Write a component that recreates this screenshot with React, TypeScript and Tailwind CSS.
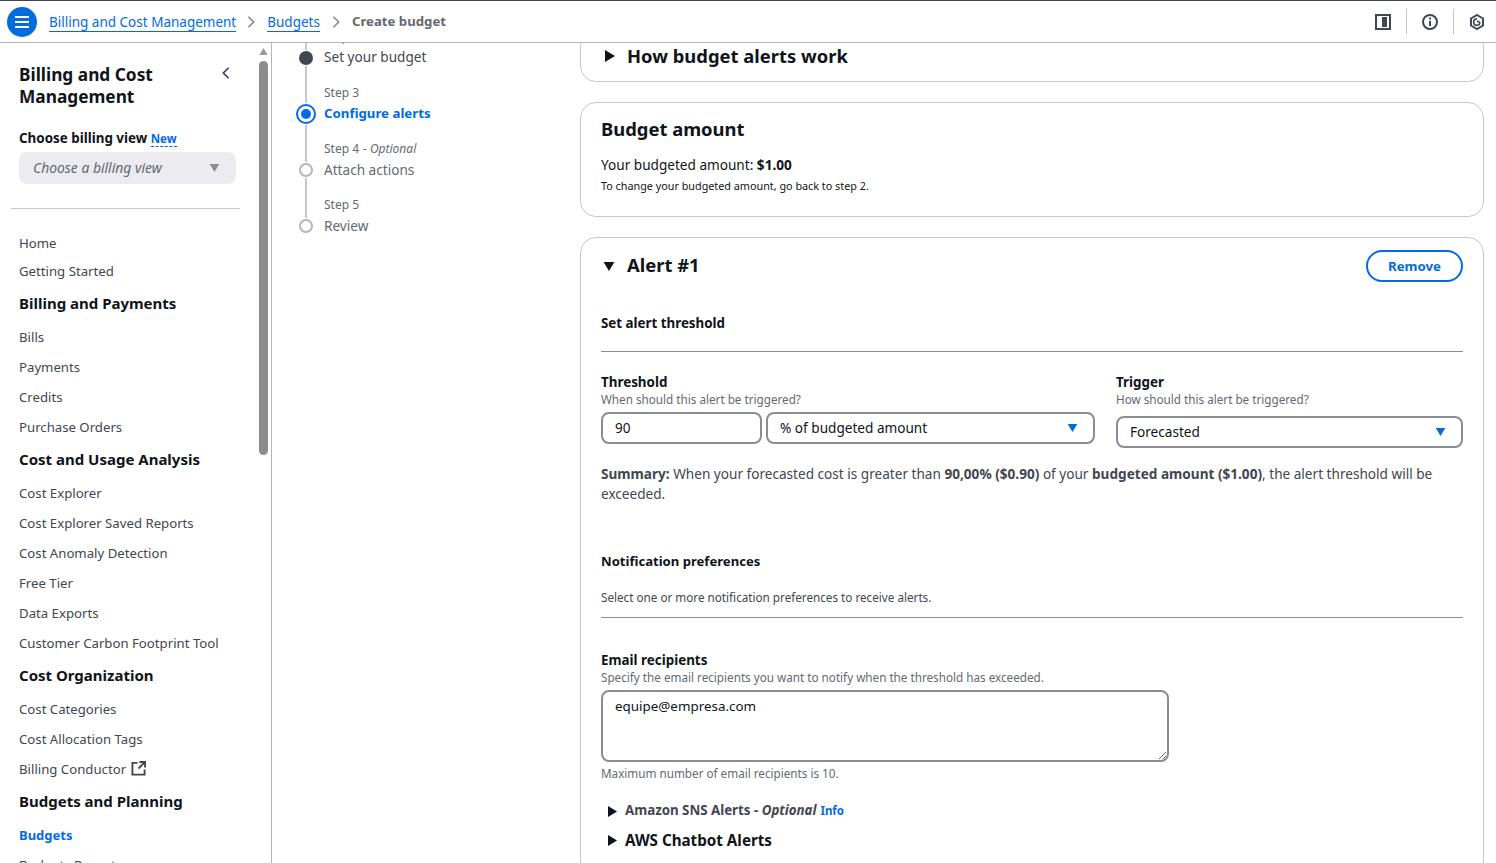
import React from 'react';

const BLUE = 'text-[#006ce0]';

type NavRow = { label: string; kind: 'item' | 'head' | 'active' | 'ext'; first?: boolean; tail?: boolean };

const NAV: NavRow[] = [
  { label: 'Home', kind: 'item', first: true },
  { label: 'Getting Started', kind: 'item', first: true, tail: true },
  { label: 'Billing and Payments', kind: 'head' },
  { label: 'Bills', kind: 'item' },
  { label: 'Payments', kind: 'item' },
  { label: 'Credits', kind: 'item' },
  { label: 'Purchase Orders', kind: 'item' },
  { label: 'Cost and Usage Analysis', kind: 'head' },
  { label: 'Cost Explorer', kind: 'item' },
  { label: 'Cost Explorer Saved Reports', kind: 'item' },
  { label: 'Cost Anomaly Detection', kind: 'item' },
  { label: 'Free Tier', kind: 'item' },
  { label: 'Data Exports', kind: 'item' },
  { label: 'Customer Carbon Footprint Tool', kind: 'item' },
  { label: 'Cost Organization', kind: 'head' },
  { label: 'Cost Categories', kind: 'item' },
  { label: 'Cost Allocation Tags', kind: 'item' },
  { label: 'Billing Conductor', kind: 'ext' },
  { label: 'Budgets and Planning', kind: 'head' },
  { label: 'Budgets', kind: 'active' },
  { label: 'Budgets Reports', kind: 'item' },
];

const STEPS = [
  { label: 'Step 2', title: 'Set your budget', state: 'done' },
  { label: 'Step 3', title: 'Configure alerts', state: 'current' },
  { label: 'Step 4', optional: true, title: 'Attach actions', state: 'todo' },
  { label: 'Step 5', title: 'Review', state: 'todo' },
];

const Chevron: React.FC<{ className?: string }> = ({ className }) => (
  <svg viewBox="0 0 10 16" className={className} fill="none" stroke="currentColor" strokeWidth="2">
    <path d="M2 2l6 6-6 6" />
  </svg>
);

const CaretRight: React.FC<{ className?: string }> = ({ className }) => (
  <svg viewBox="0 0 10 12" className={className} fill="currentColor">
    <path d="M0 0l10 6-10 6z" />
  </svg>
);

const CaretDown: React.FC<{ className?: string }> = ({ className }) => (
  <svg viewBox="0 0 12 10" className={className} fill="currentColor">
    <path d="M0 0h12L6 10z" />
  </svg>
);

const TopBar = () => (
  <header className="flex h-[43px] shrink-0 items-center border-t border-b border-t-[#424650] border-b-[#b4b4bb] bg-white">
    <div className="ml-[7px] flex h-[30px] w-[30px] items-center justify-center rounded-full bg-[#006ce0]">
      <svg viewBox="0 0 16 14" className="h-[14px] w-[16px]" stroke="white" strokeWidth="2">
        <path d="M1 2h14M1 7h14M1 12h14" />
      </svg>
    </div>
    <a className={`ml-3 mt-[1px] border-b border-[#006ce0] text-[13.5px] leading-[18px] ${BLUE}`}>Billing and Cost Management</a>
    <Chevron className="ml-[10px] h-[14px] w-[10px] text-[#8c8c94]" />
    <a className={`ml-[11px] mt-[1px] border-b border-[#006ce0] text-[13.5px] leading-[18px] ${BLUE}`}>Budgets</a>
    <Chevron className="ml-[11px] h-[14px] w-[10px] text-[#8c8c94]" />
    <span className="ml-[11px] mt-[1px] text-[13.2px] font-bold text-[#656871]">Create budget</span>
    <div className="ml-auto flex items-center text-[#424650]">
      <svg viewBox="0 0 16 16" className="h-4 w-4" fill="none">
        <rect x="1" y="1" width="14" height="14" stroke="currentColor" strokeWidth="2" />
        <rect x="7" y="3" width="5" height="10" fill="currentColor" />
      </svg>
      <div className="ml-[15px] h-[25px] w-px bg-[#c6c6cd]" />
      <svg viewBox="0 0 16 16" className="ml-[15px] h-4 w-4" fill="none" stroke="currentColor" strokeWidth="2">
        <circle cx="8" cy="8" r="7" />
        <path d="M8 7v5" />
        <path d="M8 3.4v2" />
      </svg>
      <div className="ml-[15px] h-[25px] w-px bg-[#c6c6cd]" />
      <svg viewBox="0 0 16 16" className="ml-[15px] mr-[11px] h-4 w-4" fill="none" stroke="currentColor" strokeWidth="2">
        <path d="M8 1l6 3.5v7L8 15l-6-3.5v-7z" />
        <path d="M11 8.5a3.2 3.2 0 1 1-3-3.6" strokeWidth="1.6" />
        <path d="M8 7l3 1.5" strokeWidth="1.6" />
      </svg>
    </div>
  </header>
);

const NavItem: React.FC<{ row: NavRow }> = ({ row }) => {
  if (row.kind === 'head') {
    return <div className="mb-1 flex h-8 items-center text-[15px] font-bold text-[#0f141a]">{row.label}</div>;
  }
  if (row.kind === 'active') {
    return <div className={`flex h-[30px] items-center text-[13px] font-bold ${BLUE}`}>{row.label}</div>;
  }
  return (
    <div className={`flex items-center text-[13.2px] text-[#424650] ${row.first ? 'h-[28px]' : 'h-[30px]'} ${row.tail ? 'mb-[1px]' : ''}`}>
      {row.label}
      {row.kind === 'ext' && (
        <svg viewBox="0 0 16 16" className="mb-[3px] ml-[5px] h-[15px] w-[15px]" fill="none" stroke="#424650" strokeWidth="2">
          <path d="M7 2H1.5v12.5h13V9" />
          <path d="M9 1h6v6M15 1L8 8" />
        </svg>
      )}
    </div>
  );
};

const Sidebar = () => (
  <aside className="flex w-[272px] shrink-0 border-r border-[#b4b4bb] bg-white">
    <div className="w-[258px] shrink-0 overflow-hidden pt-[21px]">
      <div className="flex items-start justify-between pl-[19px] pr-[27px]">
        <h2 className="text-[17.3px] font-bold leading-[22px] text-[#0f141a]">
          Billing and Cost
          <br />
          Management
        </h2>
        <svg viewBox="0 0 10 16" className="mt-[2px] h-[14px] w-[10px] text-[#424650]" fill="none" stroke="currentColor" strokeWidth="2">
          <path d="M8 2L2 8l6 6" />
        </svg>
      </div>
      <div className="mt-5 pl-[19px] text-[13.4px] font-bold leading-[20px] text-[#0f141a]">
        Choose billing view{' '}
        <span className={`border-b border-dashed border-[#006ce0] text-[11.5px] ${BLUE}`}>New</span>
      </div>
      <div className="ml-[19px] mr-[22px] mt-[3px] flex h-8 items-center justify-between rounded-lg bg-[#ebebf0] pl-[14px] pr-[16px] text-[13.9px] italic text-[#656871]">
        Choose a billing view
        <CaretDown className="h-[8px] w-[11px] text-[#8c8c94]" />
      </div>
      <div className="ml-[11px] mr-[18px] mt-6 h-px bg-[#c6c6cd]" />
      <nav className="mt-[21px] pl-[19px]">
        {NAV.map(row => (
          <NavItem key={row.label} row={row} />
        ))}
      </nav>
    </div>
    <div className="flex w-[13px] shrink-0 flex-col items-center pt-[5px]">
      <CaretDown className="ml-[-2px] h-[7px] w-[9px] rotate-180 text-[#9a9a9a]" />
      <div className="ml-[-2px] mt-[6px] h-[394px] w-[9px] rounded-full bg-[#8c8c8c]" />
    </div>
  </aside>
);

const StepCircle: React.FC<{ state: string }> = ({ state }) => {
  if (state === 'done') return <div className="h-[14px] w-[14px] rounded-full bg-[#424650]" />;
  if (state === 'current') {
    return (
      <div className="flex h-5 w-5 items-center justify-center rounded-full border-2 border-[#006ce0] bg-white">
        <div className="h-[10px] w-[10px] rounded-full bg-[#006ce0]" />
      </div>
    );
  }
  return <div className="h-[14px] w-[14px] rounded-full border-2 border-[#b4b4bb] bg-white" />;
};

const Steps = () => (
  <div className="ml-6 mt-[-13px] w-[284px] shrink-0">
    {STEPS.map((s, i) => (
      <div key={s.label} className="flex h-14">
        <div className="flex w-5 flex-col items-center">
          <div className="w-[2px] flex-1 bg-[#c6c6cd]" />
          <div className="py-[1px]">
            <StepCircle state={s.state} />
          </div>
          <div className={`w-[2px] flex-1 ${i === STEPS.length - 1 ? 'bg-transparent' : 'bg-[#c6c6cd]'}`} />
        </div>
        <div className="ml-2">
          <div className="flex h-[14px] items-center text-xs text-[#656871]">
            {s.label}
            {s.optional && <span className="ml-1 italic">- Optional</span>}
          </div>
          <div
            className={`flex items-center ${
              s.state === 'current'
                ? `h-[27px] text-[13.25px] font-bold ${BLUE}`
                : s.state === 'done'
                  ? 'h-[27px] text-[13.6px] text-[#424650]'
                  : 'h-7 text-[13.6px] text-[#656871]'
            }`}
          >
            {s.title}
          </div>
        </div>
      </div>
    ))}
  </div>
);

const Card: React.FC<{ className?: string; children: React.ReactNode }> = ({ className, children }) => (
  <section className={`rounded-2xl border border-[#c6c6cd] bg-white ${className ?? ''}`}>{children}</section>
);

const FieldHead: React.FC<{ title: string; hint: string }> = ({ title, hint }) => (
  <>
    <div className="text-[13.4px] font-bold leading-[17px] text-[#0f141a]">{title}</div>
    <div className="text-[11.7px] leading-[17px] text-[#656871]">{hint}</div>
  </>
);

const SelectBox: React.FC<{ value: string; className?: string }> = ({ value, className }) => (
  <div className={`flex h-8 items-center justify-between rounded-lg border-2 border-[#8c8c94] pl-3 pr-[15px] text-[13.6px] text-[#0f141a] ${className ?? ''}`}>
    {value}
    <CaretDown className={`h-[8px] w-[11px] ${BLUE}`} />
  </div>
);

const AlertCard = () => (
  <Card className="mt-5 px-5 pb-10 pt-3">
    <div className="flex h-8 items-center justify-between">
      <div className="flex items-center">
        <CaretDown className="ml-[2px] mt-[1px] h-[9px] w-[12px] text-[#0f141a]" />
        <h2 className="mb-[2px] ml-3 text-[18.4px] font-bold text-[#0f141a]">Alert #1</h2>
      </div>
      <button className={`h-8 w-[97px] rounded-full border-2 border-[#006ce0] pt-[1px] text-[13.25px] font-bold ${BLUE}`}>Remove</button>
    </div>
    <h3 className="mt-[31px] text-[13.35px] font-bold leading-[20px] text-[#0f141a]">Set alert threshold</h3>
    <div className="mt-[18px] h-px bg-[#8c8c94]" />
    <div className="mt-[22px] flex">
      <div className="w-[494px] shrink-0">
        <FieldHead title="Threshold" hint="When should this alert be triggered?" />
        <div className="mt-[4px] flex gap-1">
          <div className="flex h-8 w-[161px] items-center rounded-lg border-2 border-[#8c8c94] pl-3 text-[13.6px] text-[#0f141a]">90</div>
          <SelectBox value="% of budgeted amount" className="w-[329px]" />
        </div>
      </div>
      <div className="ml-[21px] flex-1">
        <FieldHead title="Trigger" hint="How should this alert be triggered?" />
        <SelectBox value="Forecasted" className="mt-2" />
      </div>
    </div>
    <p className="mt-4 text-[13.6px] leading-[20px] text-[#424650]">
      <b>Summary:</b> When your forecasted cost is greater than <b>90,00% ($0.90)</b> of your <b>budgeted amount ($1.00)</b>, the alert threshold will be exceeded.
    </p>
    <h3 className="mt-[47px] text-[13.1px] font-bold leading-[20px] text-[#0f141a]">Notification preferences</h3>
    <p className="mt-[18px] text-[11.7px] leading-[16px] text-[#424650]">Select one or more notification preferences to receive alerts.</p>
    <div className="mt-3 h-px bg-[#8c8c94]" />
    <div className="mt-[34px]">
      <FieldHead title="Email recipients" hint="Specify the email recipients you want to notify when the threshold has exceeded." />
    </div>
    <div className="relative mt-1 h-[72px] w-[568px] rounded-lg border-2 border-[#8c8c94] px-3 pt-1 text-[13.4px] leading-[20px] text-[#0f141a]">
      equipe@empresa.com
      <svg viewBox="0 0 8 8" className="absolute bottom-[1px] right-[1px] h-2 w-2" stroke="#656871" strokeWidth="1">
        <path d="M1 8l7-7M5 8l3-3" />
      </svg>
    </div>
    <p className="mt-[3px] text-[11.7px] leading-[16px] text-[#656871]">Maximum number of email recipients is 10.</p>
    <div className="ml-[7px] mt-5 flex h-5 items-center text-[13.3px] font-bold text-[#424650]">
      <CaretRight className="mr-2 h-[11px] w-[9px] text-[#0f141a]" />
      Amazon SNS Alerts -&nbsp;<i>Optional</i>
      <span className={`ml-1 text-[11.5px] ${BLUE}`}>Info</span>
    </div>
    <div className="ml-[7px] mt-[9px] flex h-5 items-center text-[15.2px] font-bold text-[#0f141a]">
      <CaretRight className="mr-2 h-[11px] w-[9px] text-[#0f141a]" />
      AWS Chatbot Alerts
    </div>
  </Card>
);

const Content = () => (
  <div className="mr-3 mt-[-13px] min-w-0 flex-1">
    <Card className="flex h-[52px] items-center pl-6">
      <CaretRight className="h-[12px] w-[10px] text-[#0f141a]" />
      <h2 className="ml-3 text-[18.4px] font-bold text-[#0f141a]">How budget alerts work</h2>
    </Card>
    <Card className="mt-5 h-[115px] px-5 pt-3">
      <h2 className="text-[18.4px] font-bold leading-[28px] text-[#0f141a]">Budget amount</h2>
      <p className="mt-3 text-[13.6px] leading-[20px] text-[#0f141a]">
        Your budgeted amount: <b>$1.00</b>
      </p>
      <p className="mt-[3px] text-[10.8px] leading-[16px] text-[#0f141a]">To change your budgeted amount, go back to step 2.</p>
    </Card>
    <AlertCard />
  </div>
);

export default function App() {
  return (
    <div className="flex h-[863px] w-[1496px] flex-col overflow-hidden bg-white font-['Noto_Sans',sans-serif]">
      <TopBar />
      <div className="flex min-h-0 flex-1">
        <Sidebar />
        <main className="flex min-w-0 flex-1 overflow-hidden">
          <Steps />
          <Content />
        </main>
      </div>
    </div>
  );
}
